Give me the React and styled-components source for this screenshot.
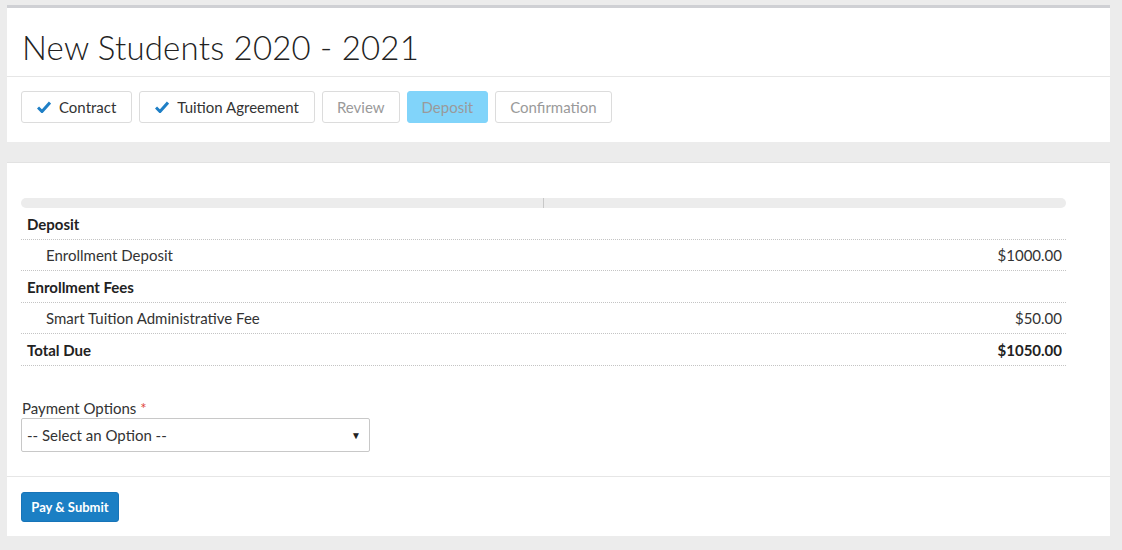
import React from "react";
import styled, { createGlobalStyle } from "styled-components";

const Global = createGlobalStyle`
  html, body { margin: 0; padding: 0; background: #ececec; }
  body { font-family: Lato, "Open Sans", "Noto Sans", sans-serif; color: #333; }
  * { box-sizing: border-box; }
`;

const Page = styled.div`
  padding: 5px 12px 14px 7px;
  display: flex;
  flex-direction: column;
  gap: 20px;
`;

const Card = styled.section`
  background: #fff;
  border-top: ${(p) => (p.$accent ? "3px solid #cfd0d4" : "1px solid #e2e2e2")};
`;

const Header = styled.div`
  height: 69px;
  padding: 0 15px;
  display: flex;
  align-items: center;
  border-bottom: 1px solid #e6e6e6;
`;

const Title = styled.h1`
  margin: 0;
  font-family: Lato, sans-serif;
  font-weight: 300;
  font-size: 33px;
  color: #222;
  letter-spacing: 0.2px;
  padding-top: 9px;
`;

const Steps = styled.div`
  display: flex;
  gap: 7px;
  padding: 14px 14px 19px;
`;

const Step = styled.div`
  height: 32px;
  display: flex;
  align-items: center;
  gap: 8px;
  padding: 0 ${(p) => (p.$done ? "15px" : "14px")};
  border: 1px solid ${(p) => (p.$active ? "#81d4fa" : "#dcdcdc")};
  border-radius: 3px;
  background: ${(p) => (p.$active ? "#81d4fa" : "#fff")};
  color: ${(p) => (p.$done ? "#333" : "#9a9a9a")};
  font-size: 15px;
  font-family: Lato, sans-serif;
`;

const Check = () => (
  <svg width="14" height="12" viewBox="0 0 14 12">
    <path d="M1 6.5 L5 10.5 L13 1.5" fill="none" stroke="#1e7fc6" strokeWidth="3" strokeLinejoin="miter" />
  </svg>
);

const Body = styled.div`
  padding: 35px 14px 24px;
`;

const Table = styled.div`
  width: 1045px;
  display: flex;
  flex-direction: column;
`;

const HeadBar = styled.div`
  height: 10px;
  background: #ececec;
  border-radius: 5px;
  display: grid;
  grid-template-columns: 523px 1fr;
  & > div:first-child { border-right: 1px solid #c8c8c8; }
`;

const Row = styled.div`
  height: 31.5px;
  display: flex;
  align-items: center;
  justify-content: space-between;
  padding: 1px 4px 0 ${(p) => (p.$indent ? "25px" : "6px")};
  border-bottom: 1px dotted #c4c4c4;
  font-size: 15px;
  font-weight: ${(p) => (p.$bold ? 700 : 400)};
  color: ${(p) => (p.$bold ? "#222" : "#333")};
`;

const Field = styled.div`
  margin-top: 33px;
  display: flex;
  flex-direction: column;
  gap: 1px;
`;

const Label = styled.label`
  font-size: 15px;
  color: #333;
  padding-left: 1px;
  & span { color: #e0463b; }
`;

const Select = styled.div`
  width: 349px;
  height: 34px;
  border: 1px solid #c8c8c8;
  border-radius: 2px;
  display: flex;
  align-items: center;
  justify-content: space-between;
  padding: 0 8px 0 5px;
  font-size: 15px;
  color: #333;
`;

const Arrow = styled.span`
  font-size: 10px;
  color: #222;
`;

const Footer = styled.div`
  border-top: 1px solid #e6e6e6;
  padding: 15px 14px 14px;
`;

const Button = styled.button`
  height: 30px;
  width: 98px;
  border: 1px solid #1774b8;
  border-radius: 3px;
  background: #1b7fc4;
  color: #fff;
  font-family: Lato, sans-serif;
  font-weight: 700;
  font-size: 13px;
  padding: 0;
`;

const rows = [
  { label: "Deposit", bold: true },
  { label: "Enrollment Deposit", amount: "$1000.00", indent: true },
  { label: "Enrollment Fees", bold: true },
  { label: "Smart Tuition Administrative Fee", amount: "$50.00", indent: true },
  { label: "Total Due", amount: "$1050.00", bold: true },
];

const steps = [
  { label: "Contract", done: true },
  { label: "Tuition Agreement", done: true },
  { label: "Review" },
  { label: "Deposit", active: true },
  { label: "Confirmation" },
];

export default function App() {
  return (
    <>
      <Global />
      <Page>
        <Card $accent>
          <Header>
            <Title>New Students 2020 - 2021</Title>
          </Header>
          <Steps>
            {steps.map((s) => (
              <Step key={s.label} $done={s.done} $active={s.active}>
                {s.done && <Check />}
                {s.label}
              </Step>
            ))}
          </Steps>
        </Card>
        <Card>
          <Body>
            <Table>
              <HeadBar>
                <div />
                <div />
              </HeadBar>
              {rows.map((r) => (
                <Row key={r.label} $bold={r.bold} $indent={r.indent}>
                  <span>{r.label}</span>
                  <span>{r.amount}</span>
                </Row>
              ))}
            </Table>
            <Field>
              <Label>
                Payment Options <span>*</span>
              </Label>
              <Select>
                <span>-- Select an Option --</span>
                <Arrow>▼</Arrow>
              </Select>
            </Field>
          </Body>
          <Footer>
            <Button>Pay &amp; Submit</Button>
          </Footer>
        </Card>
      </Page>
    </>
  );
}
